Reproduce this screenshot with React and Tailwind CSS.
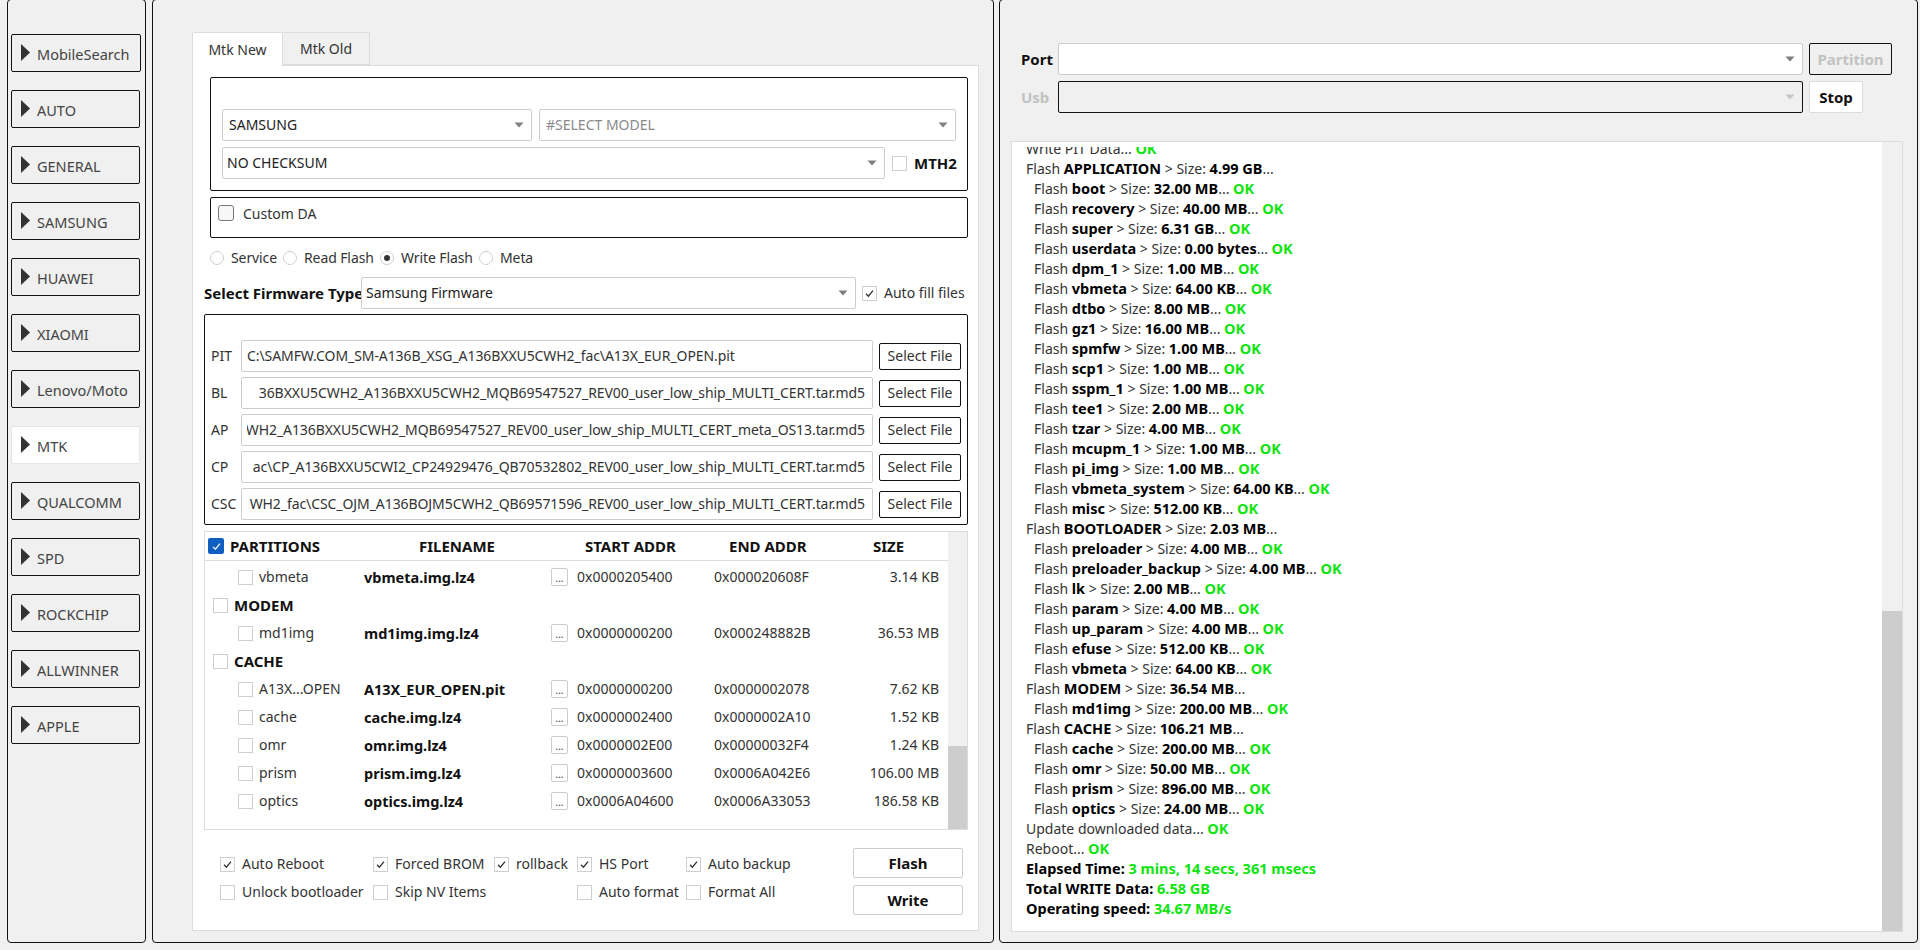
const Tri = ({ dim }) => (
  <svg width="10" height="6" viewBox="0 0 10 6" className="shrink-0"><path d="M0.5 0.5H9.5L5 5.5Z" fill={dim ? "#c4c4c4" : "#7f7f7f"} /></svg>
);

const Check = () => (
  <svg width="11" height="11" viewBox="0 0 11 11" fill="none"><path d="M2 5.8L4.4 8.2L9 2.6" stroke="#333" strokeWidth="1.3" /></svg>
);

const Cb = ({ on, className = "" }) => (
  <span className={"w-[15px] h-[15px] shrink-0 bg-white border border-[#cfcfcf] flex items-center justify-center " + className}>
    {on && <Check />}
  </span>
);

const Radio = ({ on }) => (
  <span className="w-[14px] h-[14px] shrink-0 rounded-full border border-[#cfcfcf] bg-white flex items-center justify-center">
    {on && <span className="w-[6px] h-[6px] rounded-full bg-[#333]" />}
  </span>
);

const Select = ({ className = "", text, muted, pad = "pl-[6px]" }) => (
  <div className={"h-[32px] bg-white border border-[#cdcdcd] rounded-[2px] flex items-center justify-between pr-[7px] text-[14px] " + pad + " " + className}>
    <span className={muted ? "text-[#8a8a8a]" : "text-[#222]"}>{text}</span>
    <Tri />
  </div>
);

const navs = ["MobileSearch", "AUTO", "GENERAL", "SAMSUNG", "HUAWEI", "XIAOMI", "Lenovo/Moto", "MTK", "QUALCOMM", "SPD", "ROCKCHIP", "ALLWINNER", "APPLE"];

const NavBtn = ({ label, i }) => (
  <div className={"h-[38px] flex items-center rounded-[2px] pl-[9px] " + (label === "MTK" ? "bg-white border border-[#e6e6e6] w-[129px]" : "border border-[#111] " + (i === 0 ? "w-[130px]" : "w-[129px]"))}>
    <svg width="9" height="17" viewBox="0 0 9 17" className="shrink-0 mb-[1px]"><path d="M0 0L9 8.5L0 17Z" fill="#333" /></svg>
    <span className="ml-[7px] mt-[2px] text-[14.5px] text-[#444]">{label}</span>
  </div>
);

const files = [
  ["PIT", "C:\\SAMFW.COM_SM-A136B_XSG_A136BXXU5CWH2_fac\\A13X_EUR_OPEN.pit", false],
  ["BL", "36BXXU5CWH2_A136BXXU5CWH2_MQB69547527_REV00_user_low_ship_MULTI_CERT.tar.md5", true],
  ["AP", "WH2_A136BXXU5CWH2_MQB69547527_REV00_user_low_ship_MULTI_CERT_meta_OS13.tar.md5", true],
  ["CP", "ac\\CP_A136BXXU5CWI2_CP24929476_QB70532802_REV00_user_low_ship_MULTI_CERT.tar.md5", true],
  ["CSC", "WH2_fac\\CSC_OJM_A136BOJM5CWH2_QB69571596_REV00_user_low_ship_MULTI_CERT.tar.md5", true],
];

const FileRow = ({ label, path, right }) => (
  <div className="flex items-center h-[32px] mb-[5px] last:mb-0">
    <span className="w-[31px] pl-[1px] text-[14px] text-[#333] overflow-hidden">{label}</span>
    <div className="w-[632px] h-[32px] bg-white border border-[#cdcdcd] rounded-[2px] pl-[5px] pr-[7px] flex items-center">
      <div className={"w-full flex overflow-hidden text-[14px] text-[#333] whitespace-nowrap tracking-[-0.08px] " + (right ? "justify-end" : "justify-start")}>
        <span className="shrink-0">{path}</span>
      </div>
    </div>
    <div className="ml-[6px] w-[82px] h-[27px] border border-[#111] rounded-[2px] bg-white flex items-center justify-center text-[14px] text-[#333]">Select File</div>
  </div>
);

const parts = [
  ["vbmeta", "vbmeta.img.lz4", "0x0000205400", "0x000020608F", "3.14 KB"],
  ["MODEM"],
  ["md1img", "md1img.img.lz4", "0x0000000200", "0x000248882B", "36.53 MB"],
  ["CACHE"],
  ["A13X...OPEN", "A13X_EUR_OPEN.pit", "0x0000000200", "0x0000002078", "7.62 KB"],
  ["cache", "cache.img.lz4", "0x0000002400", "0x0000002A10", "1.52 KB"],
  ["omr", "omr.img.lz4", "0x0000002E00", "0x00000032F4", "1.24 KB"],
  ["prism", "prism.img.lz4", "0x0000003600", "0x0006A042E6", "106.00 MB"],
  ["optics", "optics.img.lz4", "0x0006A04600", "0x0006A33053", "186.58 KB"],
];

const PartRow = ({ r }) =>
  r.length === 1 ? (
    <div className="h-[28px] flex items-center pl-[8px]">
      <Cb />
      <span className="ml-[6px] font-bold text-[15px] text-[#111]">{r[0]}</span>
    </div>
  ) : (
    <div className="h-[28px] flex items-center pl-[33px] text-[14px] text-[#333]">
      <Cb />
      <span className="ml-[6px] w-[105px] whitespace-nowrap">{r[0]}</span>
      <span className="w-[187px] font-bold text-[14.5px] text-[#111]">{r[1]}</span>
      <span className="w-[17px] h-[18px] bg-white border border-[#cdcdcd] rounded-[2px] flex items-end justify-center text-[10px] leading-[14px]">...</span>
      <span className="ml-[9px] w-[137px]">{r[2]}</span>
      <span className="w-[110px]">{r[3]}</span>
      <span className="w-[115px] text-right">{r[4]}</span>
    </div>
  );

const Opt = ({ on, label, className = "" }) => (
  <div className={"flex items-center shrink-0 text-[14px] text-[#333] " + className}>
    <Cb on={on} />
    <span className="ml-[7px] whitespace-nowrap">{label}</span>
  </div>
);

const OK = () => <b className="text-[#0de40d] font-bold text-[14.5px]">OK</b>;
const B = ({ children }) => <b className="text-black text-[14.5px]">{children}</b>;

const flash = (name, size, indent = true, ok = true) => (
  <div key={name + size} className={"h-[20px] whitespace-nowrap " + (indent ? "pl-[8px]" : "")}>
    Flash <B>{name}</B> {">"} Size: <B>{size}</B>... {ok && <OK />}
  </div>
);

const logA = [
  ["boot", "32.00 MB"], ["recovery", "40.00 MB"], ["super", "6.31 GB"], ["userdata", "0.00 bytes"], ["dpm_1", "1.00 MB"], ["vbmeta", "64.00 KB"], ["dtbo", "8.00 MB"], ["gz1", "16.00 MB"], ["spmfw", "1.00 MB"], ["scp1", "1.00 MB"], ["sspm_1", "1.00 MB"], ["tee1", "2.00 MB"], ["tzar", "4.00 MB"], ["mcupm_1", "1.00 MB"], ["pi_img", "1.00 MB"], ["vbmeta_system", "64.00 KB"], ["misc", "512.00 KB"],
];
const logB = [["preloader", "4.00 MB"], ["preloader_backup", "4.00 MB"], ["lk", "2.00 MB"], ["param", "4.00 MB"], ["up_param", "4.00 MB"], ["efuse", "512.00 KB"], ["vbmeta", "64.00 KB"]];
const logC = [["cache", "200.00 MB"], ["omr", "50.00 MB"], ["prism", "896.00 MB"], ["optics", "24.00 MB"]];

export default function App() {
  return (
    <div className="w-[1920px] h-[950px] bg-[#f0f0f0] overflow-hidden flex items-start font-['Noto_Sans',sans-serif] text-[14px] leading-[20px]">
      {/* left nav */}
      <aside className="ml-[7px] mt-[-1px] w-[139px] h-[944px] shrink-0 border border-[#111] rounded-[4px] pl-[3px] pt-[34px] flex flex-col gap-[18px]">
        {navs.map((n, i) => <NavBtn key={n} label={n} i={i} />)}
      </aside>

      {/* centre */}
      <main className="ml-[6px] mt-[-1px] w-[842px] h-[944px] shrink-0 border border-[#111] rounded-[4px] pl-[39px] pt-[32px]">
        <div className="flex h-[34px] relative z-10">
          <div className="w-[91px] h-[34px] bg-white border border-[#dcdcdc] border-b-0 rounded-t-[2px] flex items-center justify-center text-[#333]">Mtk New</div>
          <div className="w-[87px] h-[33px] bg-[#f0f0f0] border border-[#dcdcdc] border-l-0 flex items-center justify-center text-[#333]">Mtk Old</div>
        </div>
        <div className="w-[787px] h-[866px] bg-white border border-[#dcdcdc] mt-[-1px] pl-[11px]">
          <div className="ml-[6px] mt-[11px] w-[758px] h-[114px] border border-[#111] rounded-[2px] pl-[11px] pt-[31px]">
            <div className="flex gap-[7px]">
              <Select className="w-[310px]" text="SAMSUNG" />
              <Select className="w-[417px]" text="#SELECT MODEL" muted />
            </div>
            <div className="flex items-center mt-[6px]">
              <Select className="w-[663px]" text="NO CHECKSUM" pad="pl-[4px]" />
              <Cb className="ml-[7px]" />
              <b className="ml-[7px] text-[15px] text-[#111]">MTH2</b>
            </div>
          </div>
          <div className="ml-[6px] mt-[6px] w-[758px] h-[41px] border border-[#111] rounded-[2px] pl-[7px] pt-[7px] flex items-start">
            <span className="w-[16px] h-[16px] rounded-[3px] border border-[#777] bg-[#f7f7f7]" />
            <span className="ml-[9px] text-[#333] leading-[18px]">Custom DA</span>
          </div>
          <div className="ml-[6px] mt-[10px] h-[20px] flex items-center text-[#333] tracking-[-0.1px]">
            <Radio /><span className="ml-[7px] w-[52px]">Service</span>
            <Radio /><span className="ml-[7px] w-[76px]">Read Flash</span>
            <Radio on /><span className="ml-[7px] w-[78px]">Write Flash</span>
            <Radio /><span className="ml-[7px]">Meta</span>
          </div>
          <div className="mt-[9px] h-[32px] flex items-center">
            <b className="w-[157px] text-[15px] whitespace-nowrap text-[#111]">Select Firmware Type:</b>
            <Select className="w-[495px]" text="Samsung Firmware" pad="pl-[4px]" />
            <Cb on className="ml-[6px]" />
            <span className="ml-[7px] text-[14px] text-[#333] whitespace-nowrap">Auto fill files</span>
          </div>
          <div className="mt-[5px] w-[764px] h-[211px] border border-[#111] rounded-[2px] pl-[5px] pt-[25px]">
            {files.map((f) => <FileRow key={f[0]} label={f[0]} path={f[1]} right={f[2]} />)}
          </div>
          <div className="mt-[6px] w-[764px] h-[299px] border border-[#dcdcdc] flex">
            <div className="w-[743px] shrink-0">
              <div className="h-[29px] border-b border-[#dcdcdc] flex items-center pl-[3px] font-bold text-[15px] text-[#111]">
                <span className="w-[16px] h-[16px] rounded-[2px] bg-[#0f5fc0] flex items-center justify-center">
                  <svg width="11" height="11" viewBox="0 0 11 11" fill="none"><path d="M2 5.8L4.4 8.2L9 2.6" stroke="#fff" strokeWidth="1.2" /></svg>
                </span>
                <span className="ml-[6px] w-[189px]">PARTITIONS</span>
                <span className="w-[166px]">FILENAME</span>
                <span className="w-[144px]">START ADDR</span>
                <span className="w-[144px]">END ADDR</span>
                <span>SIZE</span>
              </div>
              <div className="pt-[2px]">
                {parts.map((r) => <PartRow key={r[0]} r={r} />)}
              </div>
            </div>
            <div className="flex-1 bg-[#f0f0f0] flex flex-col justify-end">
              <div className="h-[83px] bg-[#cdcdcd]" />
            </div>
          </div>
          <div className="mt-[18px] flex">
            <div className="w-[649px] pl-[16px] pt-[2px]">
              <div className="flex h-[28px] items-center">
                <Opt on label="Auto Reboot" className="w-[153px]" />
                <Opt on label="Forced BROM" className="w-[121px]" />
                <Opt on label="rollback" className="w-[83px]" />
                <Opt on label="HS Port" className="w-[109px]" />
                <Opt on label="Auto backup" />
              </div>
              <div className="flex h-[28px] items-center">
                <Opt label="Unlock bootloader" className="w-[153px]" />
                <Opt label="Skip NV Items" className="w-[204px]" />
                <Opt label="Auto format" className="w-[109px]" />
                <Opt label="Format All" />
              </div>
            </div>
            <div className="flex flex-col gap-[7px]">
              <div className="w-[110px] h-[30px] bg-white border border-[#cdcdcd] rounded-[2px] flex items-center justify-center font-bold text-[15px] text-[#111]">Flash</div>
              <div className="w-[110px] h-[30px] bg-white border border-[#cdcdcd] rounded-[2px] flex items-center justify-center font-bold text-[15px] text-[#111]">Write</div>
            </div>
          </div>
        </div>
      </main>

      {/* right */}
      <section className="ml-[5px] mt-[-1px] w-[919px] h-[944px] shrink-0 border border-[#111] rounded-[4px] pl-[11px]">
        <div className="mt-[43px] h-[32px] flex items-center">
          <b className="ml-[10px] w-[37px] text-[15px] text-[#111]">Port</b>
          <Select className="w-[745px]" text="" />
          <div className="ml-[6px] w-[83px] h-[32px] bg-[#f0f0f0] border border-[#111] rounded-[2px] flex items-center justify-center font-bold text-[15px] text-[#c2c2c2]">Partition</div>
        </div>
        <div className="mt-[6px] h-[32px] flex items-center">
          <b className="ml-[10px] w-[37px] text-[15px] text-[#c2c2c2]">Usb</b>
          <div className="w-[745px] h-[32px] bg-[#f0f0f0] border border-[#111] rounded-[2px] flex items-center justify-end pr-[7px]"><Tri dim /></div>
          <div className="ml-[6px] w-[54px] h-[32px] bg-white border border-[#dcdcdc] rounded-[2px] flex items-center justify-center font-bold text-[15px] text-[#111]">Stop</div>
        </div>
        <div className="mt-[28px] w-[892px] h-[791px] bg-white border border-[#dcdcdc] flex">
          <div className="w-[870px] shrink-0 pt-[5px] pl-[14px] text-[#333]">
            <div className="h-[780px] overflow-hidden">
              <div className="mt-[-9px] h-[20px] whitespace-nowrap">Write PIT Data... <OK /></div>
              {flash("APPLICATION", "4.99 GB", false, false)}
              {logA.map((l) => flash(l[0], l[1]))}
              {flash("BOOTLOADER", "2.03 MB", false, false)}
              {logB.map((l) => flash(l[0], l[1]))}
              {flash("MODEM", "36.54 MB", false, false)}
              {flash("md1img", "200.00 MB")}
              {flash("CACHE", "106.21 MB", false, false)}
              {logC.map((l) => flash(l[0], l[1]))}
              <div className="h-[20px]">Update downloaded data... <OK /></div>
              <div className="h-[20px]">Reboot... <OK /></div>
              <div className="h-[20px] font-bold text-[14.5px] text-black">Elapsed Time: <span className="text-[#0de40d]">3 mins, 14 secs, 361 msecs</span></div>
              <div className="h-[20px] font-bold text-[14.5px] text-black">Total WRITE Data: <span className="text-[#0de40d]">6.58 GB</span></div>
              <div className="h-[20px] font-bold text-[14.5px] text-black">Operating speed: <span className="text-[#0de40d]">34.67 MB/s</span></div>
            </div>
          </div>
          <div className="flex-1 bg-[#f0f0f0] flex flex-col justify-end">
            <div className="h-[320px] bg-[#cdcdcd]" />
          </div>
        </div>
      </section>
    </div>
  );
}
